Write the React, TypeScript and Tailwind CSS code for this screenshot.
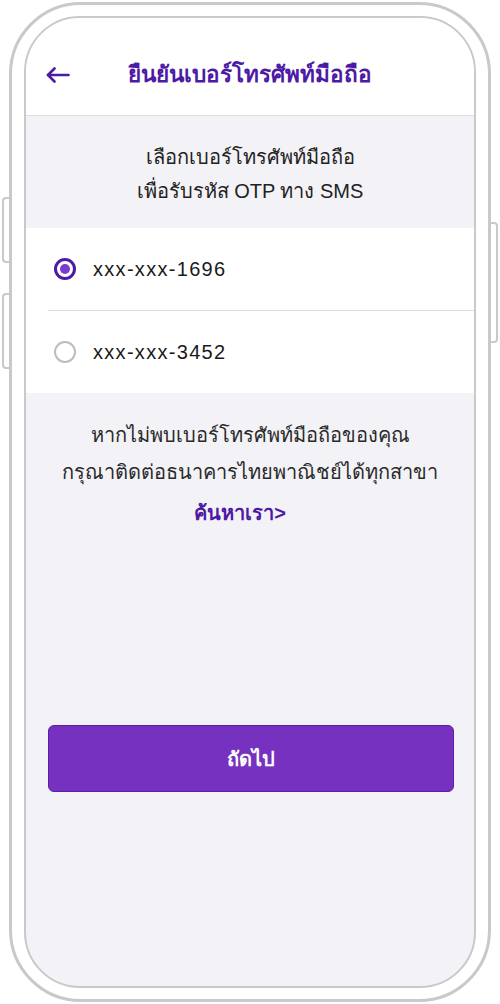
import React from "react";

const font = { fontFamily: '"Liberation Sans", "Noto Sans", sans-serif' };

function Radio({ checked }: { checked: boolean }) {
  return checked ? (
    <span className="flex h-[22px] w-[22px] items-center justify-center rounded-full border-[3px] border-[#4c1aa3] bg-white">
      <span className="h-[10px] w-[10px] rounded-full bg-[#7a3ccf]" />
    </span>
  ) : (
    <span className="h-[22px] w-[22px] rounded-full border-2 border-[#bdbdbd] bg-white" />
  );
}

export default function App() {
  return (
    <div className="relative h-[1004px] w-[500px] bg-white" style={font}>
      {/* side buttons */}
      <div className="absolute left-[2px] top-[197px] h-[66px] w-[9px] rounded-l-[4px] border-2 border-r-0 border-[#c9c9c9] bg-white" />
      <div className="absolute left-[2px] top-[293px] h-[76px] w-[9px] rounded-l-[4px] border-2 border-r-0 border-[#c9c9c9] bg-white" />
      <div className="absolute left-[488px] top-[222px] h-[121px] w-[10px] rounded-r-[4px] border-2 border-l-0 border-[#c9c9c9] bg-white" />

      <div className="pl-[9px] pr-[9px] pt-[2px]">
        <div className="relative h-[1000px] rounded-[72px] border-[3px] border-[#c9c9c9] bg-white px-[12px] pb-[11px] pt-[11px]">
          <div className="flex h-full flex-col overflow-hidden rounded-[56px] border-2 border-[#c9c9c9] bg-[#f3f2f6]">
            {/* header */}
            <div className="grid grid-cols-[1fr_auto_1fr] items-center border-b border-[#dddddd] bg-white pb-[25px] pt-[42px]">
              <div className="pl-[20px]">
                <svg width="24" height="16" viewBox="0 0 24 16" fill="none" stroke="#4c1aa3" strokeWidth="2.6" strokeLinecap="round" strokeLinejoin="round">
                  <path d="M22.5 8H2" />
                  <path d="M8.5 1.5L2 8l6.5 6.5" />
                </svg>
              </div>
              <div className="h-[30px] text-center text-[22.5px] font-bold leading-[30px] text-[#4d1aa5]">
                ยืนยันเบอร์โทรศัพท์มือถือ
              </div>
              <div />
            </div>

            {/* instructions */}
            <div className="pb-[20px] pt-[24px] text-center text-[20px] leading-[34px] text-[#222]">
              <div>เลือกเบอร์โทรศัพท์มือถือ</div>
              <div>เพื่อรับรหัส OTP ทาง SMS</div>
            </div>

            {/* list */}
            <div className="bg-white">
              <div className="flex h-[82px] items-center gap-[17px] pl-[28px]">
                <Radio checked />
                <span className="text-[20px] tracking-[1.3px] text-[#1a1a1a]">xxx-xxx-1696</span>
              </div>
              <div className="ml-[22px] h-px bg-[#dcdcdc]" />
              <div className="flex h-[82px] items-center gap-[17px] pl-[28px]">
                <Radio checked={false} />
                <span className="text-[20px] tracking-[1.3px] text-[#1a1a1a]">xxx-xxx-3452</span>
              </div>
            </div>

            {/* help */}
            <div className="pt-[24px] text-center text-[20px] leading-[37px] text-[#2a2a2a]">
              <div>หากไม่พบเบอร์โทรศัพท์มือถือของคุณ</div>
              <div>กรุณาติดต่อธนาคารไทยพาณิชย์ได้ทุกสาขา</div>
              <div className="mt-[4px] pr-[20px] text-[20px] font-bold text-[#4d1aa5]">ค้นหาเรา&gt;</div>
            </div>

            <div className="flex-1" />

            {/* button */}
            <div className="pb-[194px] pl-[22px] pr-[20px]">
              <button className="flex h-[67px] w-full items-center justify-center rounded-[6px] border border-[#5a1ea8] bg-[#7631c0] text-[20px] font-bold text-white">
                ถัดไป
              </button>
            </div>
          </div>
        </div>
      </div>
    </div>
  );
}
